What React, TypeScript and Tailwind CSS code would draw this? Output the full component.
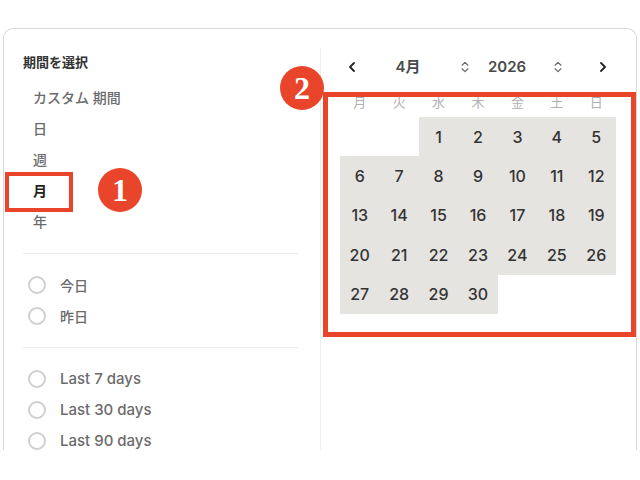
import { ChevronLeft, ChevronRight, ChevronsUpDown } from "lucide-react"

const weekdays = ["月", "火", "水", "木", "金", "土", "日"]

// April 2026 starts on a Wednesday (Monday-first week)
const cells: (number | null)[] = [
  null, null, 1, 2, 3, 4, 5,
  6, 7, 8, 9, 10, 11, 12,
  13, 14, 15, 16, 17, 18, 19,
  20, 21, 22, 23, 24, 25, 26,
  27, 28, 29, 30, null, null, null,
]

const periods = ["カスタム 期間", "日", "週", "月", "年"]

function Radio({ label, en }: { label: string; en?: boolean }) {
  return (
    <div className="flex items-center h-[31px]">
      <span className="ml-[5px] w-[18px] h-[18px] rounded-full border-2 border-[#cfcfcf] shrink-0" />
      <span className={`ml-[14px] font-medium text-[#6b6b6b] ${en ? "text-[15px]" : "text-[14px]"}`}>{label}</span>
    </div>
  )
}

function Badge({ n }: { n: string }) {
  return (
    <div className="w-[44px] h-[44px] rounded-full bg-[#e8452a] flex items-center justify-center">
      <span className="text-white text-[32px] font-bold leading-none font-['Liberation_Serif',serif]">{n}</span>
    </div>
  )
}

export default function App() {
  return (
    <div className="relative w-[640px] h-[480px] bg-white overflow-hidden font-['Inter','Noto_Sans_CJK_JP',sans-serif]">
      <div className="ml-[3px] mt-[28px] w-[634px] h-[422px] flex border border-b-0 border-[#dadada] rounded-t-[10px] overflow-hidden">
        {/* left: period list */}
        <div className="w-[316px] pl-[19px] pt-[23px] shrink-0">
          <div className="h-[20px] leading-[20px] text-[13px] font-bold text-[#333]">期間を選択</div>
          <div className="mt-[9.5px] ml-[10px]">
            {periods.map((p) => (
              <div
                key={p}
                className={`h-[31px] leading-[31px] text-[14px] ${p === "月" ? "text-[#222] font-bold" : "text-[#6b6b6b] font-medium"}`}
              >
                {p}
              </div>
            ))}
          </div>
          <div className="mt-[16.5px] w-[275px] h-px bg-[#ececec]" />
          <div className="py-[15.5px]">
            <Radio label="今日" />
            <Radio label="昨日" />
          </div>
          <div className="w-[275px] h-px bg-[#ececec]" />
          <div className="pt-[15.5px]">
            <Radio label="Last 7 days" en />
            <Radio label="Last 30 days" en />
            <Radio label="Last 90 days" en />
          </div>
        </div>

        <div className="mt-[19px] w-px bg-[#eeeeee] shrink-0" />

        {/* right: calendar */}
        <div className="flex-1">
          <div className="pt-[27px] h-[49px] flex items-center">
            <ChevronLeft className="ml-[23px] w-[16px] h-[22px] text-[#222]" strokeWidth={2.75} />
            <div className="w-[96px] text-center text-[15px] font-semibold text-[#4a4a4a]">4月</div>
            <ChevronsUpDown className="w-[18px] h-[14px] text-[#666]" strokeWidth={2} />
            <div className="w-[66px] text-center text-[15px] font-semibold text-[#4a4a4a]">2026</div>
            <ChevronsUpDown className="ml-[9px] w-[18px] h-[14px] text-[#666]" strokeWidth={2} />
            <ChevronRight className="ml-[28px] w-[16px] h-[22px] text-[#222]" strokeWidth={2.75} />
          </div>
          <div className="pl-[19px]">
            <div className="mt-[15px] w-[276px] grid grid-cols-7 h-[19px]">
              {weekdays.map((w) => (
                <div key={w} className="text-center text-[13px] leading-[19px] text-[#b0b0b0]">{w}</div>
              ))}
            </div>
            <div className="mt-[5px] w-[276px] grid grid-cols-7">
              {cells.map((d, i) => (
                <div
                  key={i}
                  className={`h-[39.4px] flex items-center justify-center text-[16px] font-medium text-[#333] ${d ? "bg-[#e5e4e1]" : ""}`}
                >
                  {d}
                </div>
              ))}
            </div>
          </div>
        </div>
      </div>

      {/* annotations */}
      <div className="absolute left-[5px] top-[172px] w-[68px] h-[40px] border-4 border-[#e8452a]" />
      <div className="absolute left-[98px] top-[168px]"><Badge n="1" /></div>
      <div className="absolute left-[323px] top-[92px] w-[313px] h-[245px] border-[5px] border-[#e8452a]" />
      <div className="absolute left-[280px] top-[66px]"><Badge n="2" /></div>
    </div>
  )
}
